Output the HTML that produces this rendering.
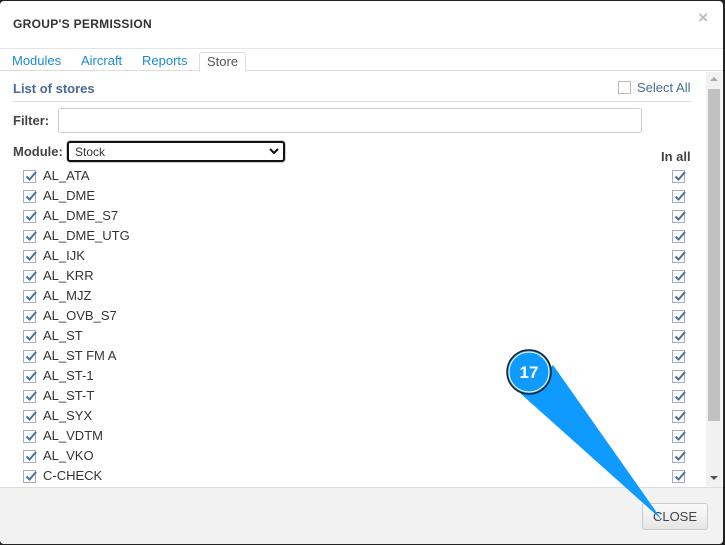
<!DOCTYPE html>
<html><head><style>
*{box-sizing:border-box}
body{margin:0;width:725px;height:545px;background:#222;font-family:"Liberation Sans",sans-serif;overflow:hidden;position:relative}
.modal{position:absolute;left:0;top:1px;width:723px;height:543px;background:#fff;border-radius:4px;overflow:hidden}
.hdr{height:48px;border-bottom:1px solid #e5e5e5;position:relative}
.hdr .t{position:absolute;left:13px;top:16px;font-size:12px;font-weight:bold;color:#333;letter-spacing:.3px}
.hdr .x{position:absolute;right:15px;top:7px;font-size:17px;color:#bbb;font-weight:bold}
.tabs{position:absolute;top:49px;left:0;right:0;height:21px;border-bottom:1px solid #ddd}
.tab{position:absolute;top:3px;font-size:13px;color:#1a8bd0}
.tab.act{top:2px;height:20px;background:#fff;border:1px solid #ddd;border-bottom:none;color:#555;padding:1px 7px 0 7px;border-radius:3px 3px 0 0}
.body{position:absolute;top:71px;left:0;width:706px;height:415px;overflow:hidden}
.sb{position:absolute;top:71px;left:706px;width:16px;height:415px;background:#f1f1f1}
.sb .th{position:absolute;left:2px;top:17px;width:12px;height:332px;background:#c1c1c1}
.foot{position:absolute;top:486px;left:0;right:0;bottom:0;background:#f2f2f2;border-top:1px solid #ddd}
.btn{position:absolute;left:642px;top:15px;width:66px;height:27px;border:1px solid #ccc;border-radius:3px;background:linear-gradient(#fafafa,#e6e6e6);font-size:13px;color:#444;text-align:center;line-height:25px}
.cb{position:absolute;width:13px;height:13px;border:1px solid #aab;background:#fff}
.cb svg{position:absolute;left:0;top:-2px}
.lbl{position:absolute;font-size:13px;color:#333}
</style></head><body>
<div class="modal">
<div class="hdr"><div class="t">GROUP'S PERMISSION</div><div class="x">×</div></div>
<div class="tabs">
<span class="tab" style="left:12px">Modules</span>
<span class="tab" style="left:81px">Aircraft</span>
<span class="tab" style="left:142px">Reports</span>
<span class="tab act" style="left:199px">Store</span>
</div>
<div class="body">
<div style="position:absolute;left:13px;top:9px;font-size:13px;font-weight:bold;color:#4a6a95">List of stores</div>
<div class="cb" style="left:618px;top:9px;border-color:#bbb"></div>
<div class="lbl" style="left:637px;top:8px;color:#4a6a95">Select All</div>
<div style="position:absolute;left:13px;top:29px;width:678px;border-top:1px solid #ddd"></div>
<div style="position:absolute;left:13px;top:41px;font-size:13px;font-weight:bold;color:#444">Filter:</div>
<div style="position:absolute;left:58px;top:36px;width:584px;height:25px;border:1px solid #ccc;border-radius:3px"></div>
<div style="position:absolute;left:13px;top:72px;font-size:13px;font-weight:bold;color:#444">Module:</div>
<div style="position:absolute;left:67px;top:69px;width:218px;height:21px;border:2px solid #111;border-radius:3px;box-shadow:0 0 0 1px #ccc;font-size:12px;color:#333;padding:2px 6px">Stock<svg style="position:absolute;right:4px;top:5px" width="10" height="7"><path d="M1 1 L5 5 L9 1" fill="none" stroke="#111" stroke-width="2"/></svg></div>
<div style="position:absolute;left:661px;top:77px;font-size:13px;font-weight:bold;color:#444">In all</div>
<div id="rows"></div>
</div>
<div class="sb"><div class="th"></div><div style="position:absolute;left:4px;top:5px;border:4px solid transparent;border-bottom-color:#aaa;border-top:none"></div><div style="position:absolute;left:4px;top:404px;border:4px solid transparent;border-top-color:#555;border-bottom:none"></div></div>
<div class="foot"><div class="btn">CLOSE</div></div>
</div>
<svg style="position:absolute;left:0;top:0" width="725" height="545">
<polygon points="521,394 553,365 662,520" fill="#0f9aff"/>
<circle cx="529" cy="372" r="22" fill="#0f9aff" stroke="#222" stroke-width="1.5"/>
<circle cx="529" cy="372" r="20" fill="none" stroke="#fff" stroke-width="1"/>
<text x="529" y="378" font-family="Liberation Sans" font-weight="bold" font-size="17" fill="#fff" text-anchor="middle">17</text>
</svg>
<script>
var n=["AL_ATA","AL_DME","AL_DME_S7","AL_DME_UTG","AL_IJK","AL_KRR","AL_MJZ","AL_OVB_S7","AL_ST","AL_ST FM A","AL_ST-1","AL_ST-T","AL_SYX","AL_VDTM","AL_VKO","C-CHECK"];
var ck='<svg width="14" height="14"><path d="M2.5 7.5 L5.5 10.5 L12 3" fill="none" stroke="#4a72a0" stroke-width="2"/></svg>';
var h="";n.forEach(function(s,i){var y=98+i*20;h+='<div class="cb" style="left:23px;top:'+y+'px">'+ck+'</div><div class="lbl" style="left:43px;top:'+(y-2)+'px">'+s+'</div><div class="cb" style="left:672px;top:'+y+'px">'+ck+'</div>';});
document.getElementById("rows").innerHTML=h;
</script>
</body></html>
